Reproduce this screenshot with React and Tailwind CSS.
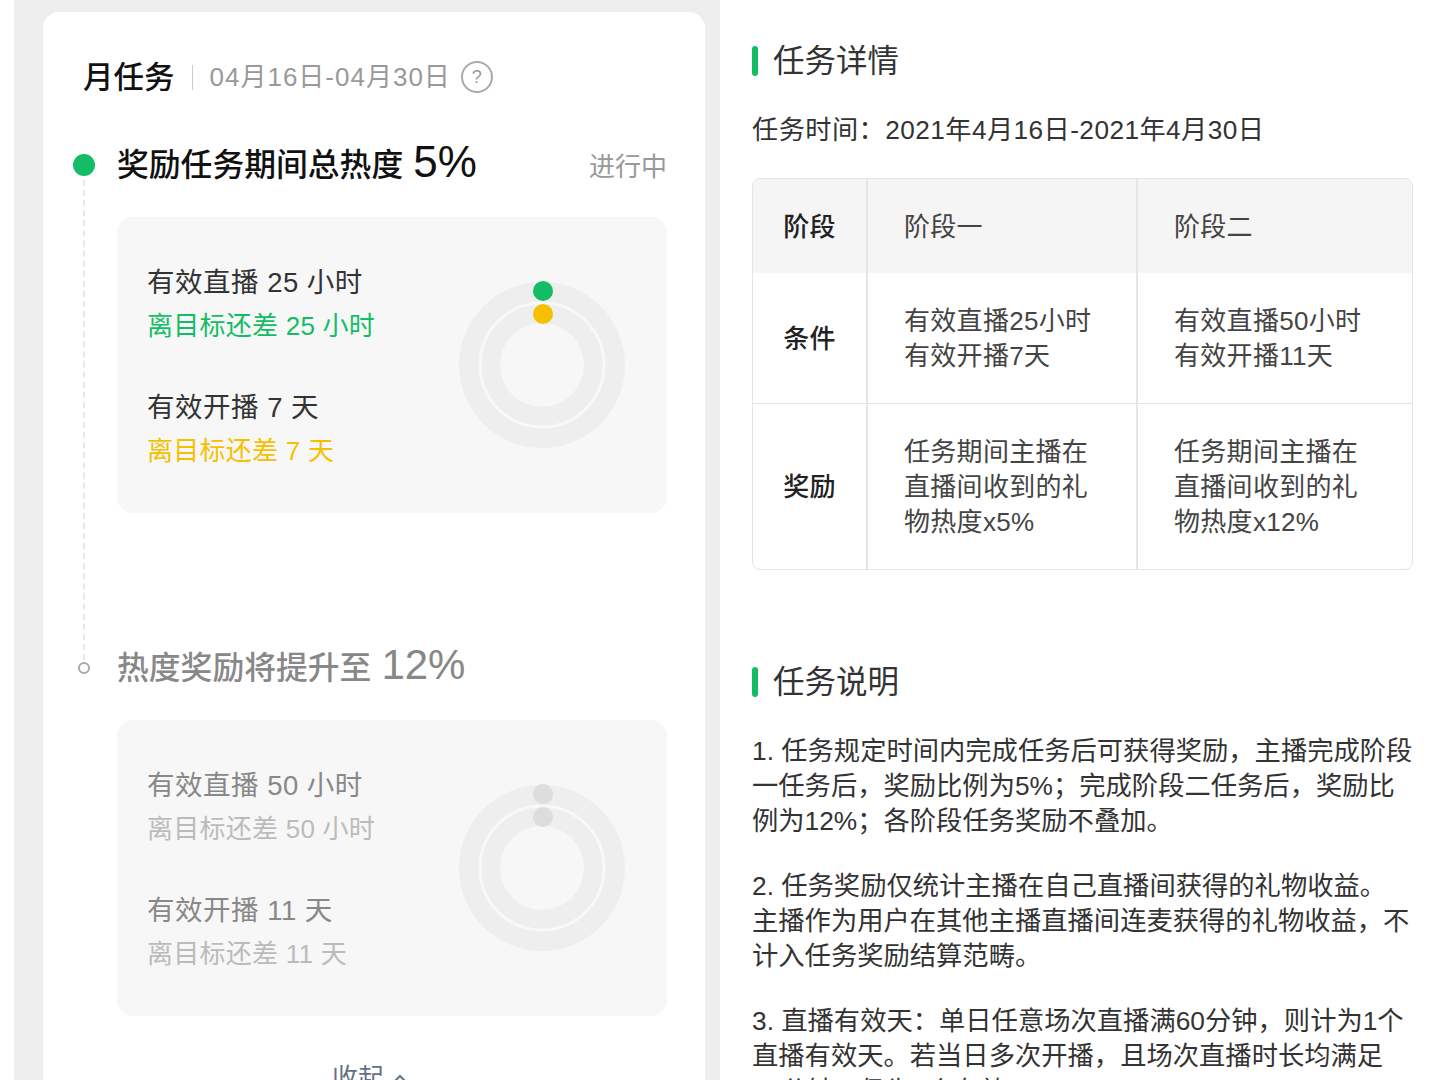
const SANS = 'font-["Liberation_Sans","Noto_Sans_CJK_SC",sans-serif]';

const Ring = ({ top, bottom }) => (
  <svg width="168" height="168" viewBox="0 0 168 168" className="shrink-0">
    <circle cx="84" cy="84" r="83" fill="#eeeeee" />
    <circle cx="84" cy="84" r="62" fill="none" stroke="#f8f8f8" strokeWidth="3" />
    <circle cx="84" cy="84" r="42" fill="#f7f7f7" />
    <circle cx="85" cy="10" r="10" fill={top} />
    <circle cx="85" cy="33" r="10" fill={bottom} />
  </svg>
);

const TaskBox = ({ rows, dots, titleColor }) => (
  <div className="mt-[30px] flex h-[296px] items-center justify-between rounded-2xl bg-[#f7f7f7] pl-[30px] pr-[41px]">
    <div className="mt-[3px] flex flex-col gap-[38px]">
      {rows.map((row) => (
        <div key={row.title}>
          <div className={`text-[27.5px] leading-[43px] tracking-[0.5px] ${titleColor}`}>{row.title}</div>
          <div className={`text-[26px] leading-[44px] tracking-[0.25px] ${row.color}`}>{row.sub}</div>
        </div>
      ))}
    </div>
    <Ring top={dots[0]} bottom={dots[1]} />
  </div>
);

const Heading = ({ children, className }) => (
  <div className={`flex h-[30px] items-center gap-[15px] ${className}`}>
    <span className="h-[30px] w-[6px] rounded-sm bg-[#13bd65]" />
    <span className="text-[31.5px] leading-[30px] text-[#333333]">{children}</span>
  </div>
);

const Cell = ({ head, bg, lines, className }) => (
  <div className={`flex items-center border-[#e5e5e5] pt-[2px] ${head ? 'justify-center font-medium text-[#222222]' : 'pl-[36px] text-[#444444]'} ${bg ? 'bg-[#f5f5f5]' : ''} ${className}`}>
    <div className="text-[26px] leading-[35px] tracking-[0.3px]">
      {lines.map((line) => (
        <div key={line}>{line}</div>
      ))}
    </div>
  </div>
);

const Para = ({ lines, className }) => (
  <div className={`text-[26.3px] leading-[35px] text-[#333333] ${className}`}>
    {lines.map((line) => (
      <div key={line} className="whitespace-nowrap">{line}</div>
    ))}
  </div>
);

export default function App() {
  return (
    <div className={`flex h-[1080px] w-[1440px] overflow-hidden bg-white ${SANS}`}>
      <div className="ml-[14px] w-[706px] shrink-0 bg-[#eeeeee] pl-[29px] pr-[15px] pt-3">
        <div className="h-[1200px] rounded-t-2xl bg-white pl-[30px] pr-[38px] pt-[45px]">
          <div className="flex h-10 items-center pl-[10px]">
            <span className="pt-[2px] text-[30.5px] font-medium text-[#111111]">月任务</span>
            <span className="mx-[17px] h-[25px] w-px bg-[#cccccc]" />
            <span className="text-[26px] tracking-[1px] text-[#999999]">04月16日-04月30日</span>
            <span className="ml-[10px] flex h-[32px] w-[32px] items-center justify-center rounded-full border-2 border-[#aaaaaa] text-[18px] text-[#999999]">?</span>
          </div>

          <div className="mt-[46px] flex gap-[22px]">
            <div className="mt-[11px] flex h-[520px] w-[22px] shrink-0 flex-col items-center">
              <span className="h-[22px] w-[22px] rounded-full bg-[#13bd65]" />
              <span className="mb-[2px] mt-[4px] flex-1 border-l-2 border-dashed border-[#eee4e4]" />
              <span className="h-[12px] w-[12px] rounded-full border-2 border-[#aaaaaa]" />
            </div>

            <div className="min-w-0 flex-1">
              <div className="flex h-[44px] items-center justify-between">
                <div className="flex items-center gap-[10px]">
                  <span className="pt-[2px] text-[31.8px] font-medium text-[#111111]">奖励任务期间总热度</span>
                  <span className="-mt-[6px] text-[44px] leading-[44px] text-[#111111]">5%</span>
                </div>
                <span className="pt-[4px] text-[26px] text-[#999999]">进行中</span>
              </div>
              <TaskBox
                titleColor="text-[#333333]"
                dots={['#13bd65', '#f6c000']}
                rows={[
                  { title: '有效直播 25 小时', sub: '离目标还差 25 小时', color: 'text-[#13bd65]' },
                  { title: '有效开播 7 天', sub: '离目标还差 7 天', color: 'text-[#f6c000]' },
                ]}
              />

              <div className="mt-[133px] flex h-[44px] items-center gap-[10px]">
                <span className="pt-[2px] text-[31.8px] font-medium text-[#888888]">热度奖励将提升至</span>
                <span className="-mt-[6px] text-[42px] leading-[44px] text-[#888888]">12%</span>
              </div>
              <TaskBox
                titleColor="text-[#888888]"
                dots={['#dddddd', '#dddddd']}
                rows={[
                  { title: '有效直播 50 小时', sub: '离目标还差 50 小时', color: 'text-[#bbbbbb]' },
                  { title: '有效开播 11 天', sub: '离目标还差 11 天', color: 'text-[#bbbbbb]' },
                ]}
              />
              <div className="mt-[42px] flex items-center justify-center gap-2 pr-[44px] text-[26px] leading-10 text-[#667085]">
                收起
                <svg width="16" height="10" viewBox="0 0 16 10" fill="none" stroke="#667085" strokeWidth="2"><path d="M2 9 L8 3 L14 9" /></svg>
              </div>
            </div>
          </div>
        </div>
      </div>

      <div className="min-w-0 flex-1 pl-[32px] pr-[27px] pt-[46px]">
        <Heading>任务详情</Heading>
        <div className="mt-[36px] text-[26.2px] leading-9 tracking-[0.45px] text-[#333333]">任务时间：2021年4月16日-2021年4月30日</div>

        <div className="mt-[30px] grid grid-cols-[115px_270px_1fr] grid-rows-[94px_131px_165px] overflow-hidden rounded-lg border border-[#e5e5e5]">
          <Cell head bg lines={['阶段']} className="border-r-2" />
          <Cell bg lines={['阶段一']} className="border-r-2" />
          <Cell bg lines={['阶段二']} />
          <Cell head lines={['条件']} className="border-b border-r-2" />
          <Cell lines={['有效直播25小时', '有效开播7天']} className="border-b border-r-2" />
          <Cell lines={['有效直播50小时', '有效开播11天']} className="border-b" />
          <Cell head lines={['奖励']} className="border-r-2" />
          <Cell lines={['任务期间主播在', '直播间收到的礼', '物热度x5%']} className="border-r-2" />
          <Cell lines={['任务期间主播在', '直播间收到的礼', '物热度x12%']} />
        </div>

        <Heading className="mt-[97px]">任务说明</Heading>
        <Para
          className="mt-[37px]"
          lines={[
            '1. 任务规定时间内完成任务后可获得奖励，主播完成阶段',
            '一任务后，奖励比例为5%；完成阶段二任务后，奖励比',
            '例为12%；各阶段任务奖励不叠加。',
          ]}
        />
        <Para
          className="mt-[30px]"
          lines={[
            '2. 任务奖励仅统计主播在自己直播间获得的礼物收益。',
            '主播作为用户在其他主播直播间连麦获得的礼物收益，不',
            '计入任务奖励结算范畴。',
          ]}
        />
        <Para
          className="mt-[30px]"
          lines={[
            '3. 直播有效天：单日任意场次直播满60分钟，则计为1个',
            '直播有效天。若当日多次开播，且场次直播时长均满足',
            '60分钟，仍为1个有效天。',
          ]}
        />
      </div>
    </div>
  );
}
